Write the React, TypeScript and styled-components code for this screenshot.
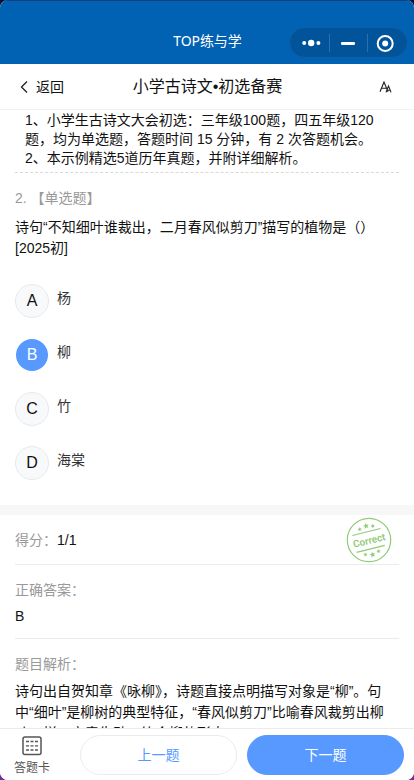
import React from "react";
import styled, { createGlobalStyle } from "styled-components";

const Global = createGlobalStyle`
  * { box-sizing: border-box; }
  html, body { margin: 0; padding: 0; height: 780px; overflow: hidden; }
  body { background: #fff; font-family: "Liberation Sans", "Noto Sans CJK SC", sans-serif; font-size: 14px; color: #111; }
  button { font: inherit; border: 0; background: none; padding: 0; }
`;

const Desktop = styled.div`
  width: 414px;
  height: 780px;
  background: linear-gradient(#0c1030 0 50%, #6d3192 50%);
`;

const Phone = styled.main`
  width: 414px;
  height: 780px;
  display: flex;
  flex-direction: column;
  overflow: hidden;
  background: #fff;
  border-radius: 8px;
`;

const TitleBar = styled.header`
  flex: none;
  height: 64px;
  padding: 20px 6px 0 0;
  border-top: 1px solid #123f78;
  display: grid;
  grid-template-columns: 1fr auto 1fr;
  align-items: center;
  background: #0161b3;
  color: #fff;
`;

const AppName = styled.div`
  grid-column: 2;
  padding: 0 0 4px 7px;
  font: 14px "Noto Sans", "Noto Sans CJK SC", sans-serif;
  line-height: 20px;
  letter-spacing: -0.1px;
`;

const Capsule = styled.div`
  justify-self: end;
  width: 119px;
  height: 31px;
  margin-bottom: 1px;
  border-radius: 16px;
  border: 1px solid #115fa5;
  background: #01549a;
`;

const NavBar = styled.nav`
  flex: none;
  height: 46px;
  padding: 0 22px 0 19px;
  display: grid;
  grid-template-columns: 1fr auto 1fr;
  align-items: center;
  border-bottom: 1px solid #f2f2f2;
`;

const Back = styled.button`
  display: flex;
  align-items: center;
  gap: 6px;
  color: #111;
  line-height: 20px;
`;

const NavTitle = styled.h1`
  margin: 0;
  padding-left: 4px;
  font-size: 16px;
  font-weight: 400;
  line-height: 22px;
`;

const FontSize = styled.svg`
  justify-self: end;
`;

const Scroll = styled.section`
  flex: 1;
  min-height: 0;
  overflow: hidden;
`;

const Intro = styled.div`
  margin: 0 15px;
  padding: 1px 10px 4px;
  line-height: 19px;
  white-space: nowrap;
  border-bottom: 1px dashed #d9d9d9;
`;

const Question = styled.div`
  padding: 15px 15px 0;
  line-height: 21px;
  white-space: nowrap;
`;

const Kind = styled.div`
  color: #999;
  margin-bottom: 8px;
`;

const Options = styled.div`
  display: flex;
  flex-direction: column;
  gap: 20px;
  padding: 25px 15px;
`;

const Option = styled.div`
  display: flex;
  gap: 8px;
  height: 34px;
  color: #333;
  line-height: 28px;
`;

const Letter = styled.span<{ $selected?: boolean }>`
  width: 34px;
  height: 34px;
  border-radius: 50%;
  display: flex;
  align-items: center;
  justify-content: center;
  font-size: 16px;
  background: ${(p) => (p.$selected ? "#5899ff" : "#f8f9fb")};
  background-clip: padding-box;
  border: 1px solid ${(p) => (p.$selected ? "transparent" : "#e6e8eb")};
  color: ${(p) => (p.$selected ? "#fff" : "#111")};
`;

const Divider = styled.div`
  height: 10px;
  background: #f7f7f7;
`;

const Result = styled.div`
  margin: 0 15px;
  line-height: 21px;
`;

const Score = styled.div`
  height: 50px;
  display: flex;
  align-items: center;
  padding-top: 2px;
  position: relative;
  border-bottom: 1px solid #ebebeb;
`;

const Label = styled.div`
  color: #999;
`;

const Stamp = styled.svg`
  position: absolute;
  right: 7px;
  top: 2px;
`;

const Block = styled.div<{ $last?: boolean }>`
  padding: 15px 0 ${(p) => (p.$last ? 0 : 11)}px;
  border-bottom: ${(p) => (p.$last ? "0" : "1px solid #ebebeb")};
  white-space: nowrap;
`;

const Content = styled.div<{ $gap: number }>`
  margin-top: ${(p) => p.$gap}px;
`;

const Footer = styled.footer`
  flex: none;
  height: 52px;
  border-top: 1px solid #ebebeb;
  display: flex;
  align-items: flex-start;
  padding: 6px 10px 0 10px;
  background: #fff;
`;

const Card = styled.button`
  width: 44px;
  margin-right: 26px;
  display: flex;
  flex-direction: column;
  align-items: center;
  color: #555;
  font-size: 12px;
  line-height: 18px;
  gap: 3px;
`;

const Pill = styled.button<{ $primary?: boolean }>`
  width: 157px;
  height: 40px;
  padding-bottom: 2px;
  border-radius: 20px;
  border: 1px solid ${(p) => (p.$primary ? "#5899ff" : "#ececec")};
  background: ${(p) => (p.$primary ? "#5899ff" : "#fff")};
  color: ${(p) => (p.$primary ? "#fff" : "#5899ff")};
  margin-right: ${(p) => (p.$primary ? 0 : 10)}px;
`;

const OPTIONS = [
  { key: "A", text: "杨" },
  { key: "B", text: "柳", selected: true },
  { key: "C", text: "竹" },
  { key: "D", text: "海棠" },
];

const STAR = "M0-3 .8-1 3-.9 1.3.5 1.9 2.6 0 1.4-1.9 2.6-1.3.5-3-.9-.8-1Z";

export default function App() {
  return (
    <Desktop>
      <Global />
      <Phone>
        <TitleBar>
          <AppName>TOP练与学</AppName>
          <Capsule>
            <svg width="117" height="29" viewBox="0 0 117 29" fill="#fff">
              <circle cx="14.2" cy="15" r="2" />
              <circle cx="21.2" cy="15" r="3.2" />
              <circle cx="28.4" cy="15" r="2" />
              <path d="M39.5 6v18M77.5 6v18" stroke="#2a70ae" />
              <rect x="51" y="13.9" width="14" height="3" rx="1.2" />
              <circle cx="95.2" cy="15.5" r="7.5" fill="none" stroke="#fff" strokeWidth="2" />
              <circle cx="95.2" cy="15.5" r="3" />
            </svg>
          </Capsule>
        </TitleBar>
        <NavBar>
          <Back>
            <svg width="11" height="14" viewBox="0 0 11 14" fill="none" stroke="#222" strokeWidth="1.3">
              <path d="M8 1.5 2.5 7 8 12.5" />
            </svg>
            返回
          </Back>
          <NavTitle>小学古诗文•初选备赛</NavTitle>
          <FontSize width="13" height="12" viewBox="0 0 13 12" fill="none" stroke="#222" strokeWidth="1.1">
            <path d="M1 10.8 5 1l4 9.8M2.5 7.2h5M7 11.4l2.5-6.4 2.6 6.4M7.9 9.3h3.4" />
          </FontSize>
        </NavBar>
        <Scroll>
          <Intro>
            1、小学生古诗文大会初选：三年级100题，四五年级120
            <br />
            题，均为单选题，答题时间 15 分钟，有 2 次答题机会。
            <br />
            2、本示例精选5道历年真题，并附详细解析。
          </Intro>
          <Question>
            <Kind>2. 【单选题】</Kind>
            诗句“不知细叶谁裁出，二月春风似剪刀”描写的植物是（）
            <br />
            [2025初]
          </Question>
          <Options>
            {OPTIONS.map((o) => (
              <Option key={o.key}>
                <Letter $selected={o.selected}>{o.key}</Letter>
                {o.text}
              </Option>
            ))}
          </Options>
          <Divider />
          <Result>
            <Score>
              <Label>得分：</Label>1/1
              <Stamp width="46" height="46" viewBox="0 0 46 46" fill="#8fcb78">
                <circle cx="23" cy="23" r="21.7" fill="none" stroke="#8fcb78" strokeWidth="1.2" />
                <g transform="rotate(-14 23 23)">
                  <path d="M8 14.6h29M8 32h29" stroke="#8fcb78" strokeWidth="1.1" />
                  <text x="23" y="27" textAnchor="middle" fontFamily="Roboto" fontSize="10" fontWeight="600" textLength="33">Correct</text>
                  <path d={STAR} transform="translate(23.5 8.6)" />
                  <path d={STAR} transform="translate(16.5 10.3) scale(.75)" />
                  <path d={STAR} transform="translate(30 10.3) scale(.75)" />
                  <path d={STAR} transform="translate(23 38)" />
                  <path d={STAR} transform="translate(16 36.2) scale(.75)" />
                  <path d={STAR} transform="translate(29.5 36.2) scale(.75)" />
                </g>
              </Stamp>
            </Score>
            <Block>
              <Label>正确答案：</Label>
              <Content $gap={5}>B</Content>
            </Block>
            <Block $last>
              <Label>题目解析：</Label>
              <Content $gap={6}>
                诗句出自贺知章《咏柳》，诗题直接点明描写对象是“柳”。句
                <br />
                中“细叶”是柳树的典型特征，“春风似剪刀”比喻春风裁剪出柳
                <br />
                叶一样，立意生动，符合柳的形态。
              </Content>
            </Block>
          </Result>
        </Scroll>
        <Footer>
          <Card>
            <svg width="20" height="21" viewBox="0 0 20 21" fill="none" stroke="#555" strokeWidth="1.5">
              <rect x="1" y="2" width="18" height="17.5" rx="2" />
              <path d="M4 6.5h12M4 10.8h12M4 15h12" strokeDasharray="3 1.5" strokeWidth="1.3" />
            </svg>
            答题卡
          </Card>
          <Pill>上一题</Pill>
          <Pill $primary>下一题</Pill>
        </Footer>
      </Phone>
    </Desktop>
  );
}
